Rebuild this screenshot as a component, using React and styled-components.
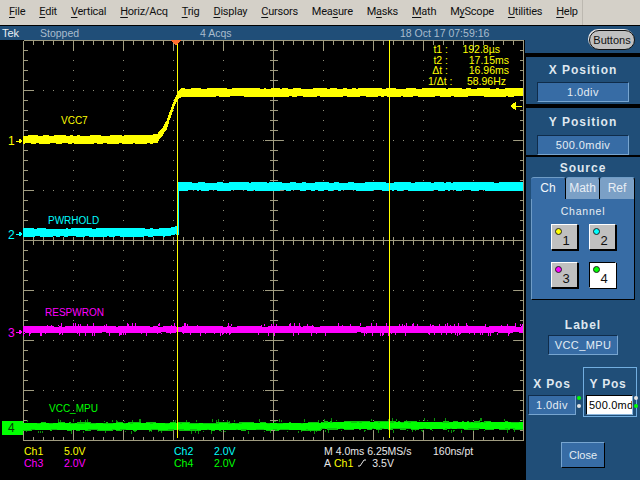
import React from "react";
import styled, { createGlobalStyle } from "styled-components";

const Y = "#ffff00", C = "#00ffff", M = "#ff00ff", G = "#00ff00";
const BLUE = "#204e78", FIELD = "#376ca5", LINE = "#a09c80", DOT = "#8c8c78";
const SCOPE = "'Liberation Sans', Arial, sans-serif";

const Global = createGlobalStyle`
  html, body { margin: 0; padding: 0; background: #000; }
  * { box-sizing: border-box; }
`;

const Screen = styled.div`
  width: 640px; height: 480px; display: flex; flex-direction: column;
  background: #000; overflow: hidden; font-family: ${SCOPE}; font-size: 10.5px;
`;
const MenuBar = styled.div`
  height: 26px; flex: none; display: flex; align-items: center; gap: 14px;
  padding: 0 0 2px 9px; background: #d4d0c8; border-bottom: 1px solid #000;
  font-family: Roboto, sans-serif; font-size: 11px; letter-spacing: -.25px; color: #111; position: relative;
`;
const MenuItem = styled.span`
  u { text-underline-offset: 2px; }
`;
const MenuDivider = styled.i`
  position: absolute; left: 582px; top: 0; bottom: 0; width: 1px; background: #bcb8b0;
`;
const Body = styled.div`
  flex: 1; display: flex; min-height: 0;
`;
const Main = styled.div`
  width: 525px; flex: none; display: flex; flex-direction: column;
`;
const StatusBar = styled.div`
  height: 14px; flex: none; background: ${BLUE}; display: grid;
  grid-template-columns: 38px 160px 200px 1fr; align-items: center; padding-left: 2px;
  line-height: 14px; color: #a9bccd;
`;
const Tek = styled.span`color: #e8eef4; font-size: 11px;`;
const Plot = styled.div`
  position: relative; height: 401px; flex: none;
`;
const PlotSvg = styled.svg`
  display: block; width: 525px; height: 401px;
`;
const Tag = styled.span`
  position: absolute; left: ${p => p.$x}px; top: ${p => p.$y}px; color: ${p => p.$c};
  font-size: 10px; line-height: 11px; white-space: nowrap;
`;
const GroundNum = styled.span`
  position: absolute; left: ${p => p.$x}px; top: ${p => p.$y}px; color: ${p => p.$c};
  font-size: 12px; line-height: 12px;
`;
const GroundChip = styled.div`
  position: absolute; left: 2px; top: 381px; width: 21px; height: 14px; background: ${G};
  color: #0a3a0a; font-size: 12px; line-height: 15px; padding-left: 6px;
`;
const CursorBox = styled.div`
  position: absolute; left: 428px; top: 4px; width: 81px; display: grid;
  grid-template-columns: 20px 1fr; grid-auto-rows: 10.7px; line-height: 11px; color: ${Y}; font-size: 10.5px;
`;
const CursorKey = styled.span`text-align: right; white-space: nowrap;`;
const CursorVal = styled.span`text-align: right; padding-right: ${p => p.$inset}px; white-space: nowrap;`;
const Footer = styled.div`
  flex: 1; display: grid; grid-template-columns: 40px 110px 40px 110px 109px 1fr;
  grid-auto-rows: 12px; padding: 4px 0 0 24px; line-height: 12px;
`;
const Read = styled.span`color: ${p => p.$c || "#e8e8e8"}; white-space: nowrap;`;
const Trigger = styled.span`
  grid-column: span 2; color: #e8e8e8; display: flex; align-items: center; gap: 3px;
`;
const Slope = styled.svg`width: 8px; height: 8px; margin: 0 3px 0 2px;`;

const Side = styled.div`
  flex: 1; display: flex; flex-direction: column; background: #000;
`;
const SideHeader = styled.div`
  height: 27px; background: ${BLUE}; display: flex; justify-content: flex-end; align-items: flex-start;
  padding: 4px 5px 0 0; margin-bottom: 4px;
`;
const Pill = styled.div`
  width: 46px; height: 20px; border-radius: 11px; background: #c0c0c0; color: #111;
  border: 1px solid #111; box-shadow: -1px -1px 0 #e8e8e8; text-align: center; line-height: 18px;
  font-size: 11px;
`;
const Panel = styled.div`
  margin-left: 1px; margin-bottom: ${p => p.$gap || 0}px; background: ${BLUE}; padding-top: ${p => p.$top}px; height: ${p => p.$h}px;
  display: flex; flex-direction: column; align-items: center; flex: ${p => (p.$h ? "none" : 1)};
`;
const Title = styled.div`
  color: #dfe7ef; font-weight: bold; font-size: 12px; letter-spacing: 1px; line-height: 15px; white-space: nowrap;
`;
const Field = styled.div`
  width: ${p => p.$w}px; height: 20px; margin-top: ${p => p.$mt}px; background: ${FIELD}; color: #e4ecf4;
  border: 1px solid; border-color: #0f2c4a #77a5d0 #77a5d0 #0f2c4a; text-align: center; line-height: 18px;
  white-space: nowrap; overflow: hidden; font-size: 11px; letter-spacing: .4px;
`;
const Tabs = styled.div`
  width: 104px; margin-top: 1px; display: flex; flex-direction: column;
`;
const TabRow = styled.div`display: grid; grid-template-columns: 35px 34px 35px; height: 22px;`;
const Tab = styled.div`
  background: ${p => (p.$on ? FIELD : "#7ba0c6")}; color: ${p => (p.$on ? "#f2f6fa" : "#e8eef4")};
  border-right: 1px solid #000;
  border-top: 1px solid #6f9cc6; border-radius: 3px 3px 0 0; text-align: center; line-height: 21px; font-size: 12px;
`;
const TabBody = styled.div`
  height: 101px; background: ${FIELD}; border-left: 1px solid #6f9cc6;
  border-right: 1px solid #000; border-bottom: 1px solid #000; padding-top: 6px;
  display: flex; flex-direction: column; align-items: center; color: #e8eef4; letter-spacing: .8px; line-height: 13px;
`;
const ChannelGrid = styled.div`
  margin-top: 6px; display: grid; grid-template-columns: 27px 27px; grid-auto-rows: 26px; gap: 12px 11px; letter-spacing: 0;
`;
const ChanBtn = styled.div`
  position: relative; background: ${p => (p.$on ? "#fff" : "#c0c0c0")};
  border: 1px solid; border-color: ${p => (p.$on ? "#000 #fff #fff #000" : "#fff #000 #000 #fff")};
  box-shadow: 1px 1px 0 #000; font-size: 13px; color: #111; line-height: 13px; padding: 9px 0 0 11px;
`;
const ChanDot = styled.i`
  position: absolute; left: 3px; top: 3px; width: 7px; height: 7px; border-radius: 50%;
  background: ${p => p.$c}; border: 1px solid #222;
`;
const LabelSection = styled.div`margin-top: 18px; display: flex; flex-direction: column; align-items: center;`;
const PosRow = styled.div`
  width: 109px; margin: 12px 0 0 2px; align-self: flex-start; display: grid; grid-template-columns: 55px 54px; align-items: start;
`;
const PosCell = styled.div`
  height: 50px; display: flex; flex-direction: column; align-items: flex-start; padding: 10px 0 0 0; position: relative;
`;
const PosBox = styled(PosCell)`
  border: 1px solid #72aee0; padding: 9px 0 0 2px;
`;
const PosTitle = styled(Title)`width: ${p => p.$w}px; text-align: center; letter-spacing: .8px;`;
const InField = styled(Field)`
  background: #fff; color: #000; border-color: #000 #88b4dc #88b4dc #000; text-align: left; padding-left: 2px; letter-spacing: .2px;
`;
const Knob = styled.i`
  position: absolute; width: 4px; height: 4px; border-radius: 50%; left: ${p => p.$x}px; top: ${p => p.$y}px;
  background: ${p => (p.$on ? G : "#e4e4e4")};
`;
const CloseBtn = styled.div`
  margin-top: 25px; width: 44px; height: 26px; background: ${FIELD}; color: #e4ecf4; text-align: center; line-height: 25px;
  border: 1px solid; border-color: #77a5d0 #000 #000 #77a5d0; font-size: 11px;
`;

function rng(seed) {
  let s = seed;
  return () => { s = (s * 1664525 + 1013904223) >>> 0; return s / 4294967296; };
}
function interp(pts, x) {
  if (x <= pts[0][0]) return pts[0][1];
  for (let i = 1; i < pts.length; i++) {
    if (x <= pts[i][0]) {
      const [a, b] = pts[i - 1], [c, d] = pts[i];
      return b + (d - b) * (x - a) / (c - a);
    }
  }
  return pts[pts.length - 1][1];
}
/* Solid trace whose two edges are notched in short runs, like an envelope-mode acquisition. */
function band(seed, pts, half, notch, odds) {
  const r = rng(seed);
  let d = "", runT = 0, valT = 0, runB = 0, valB = 0;
  for (let x = 23; x < 523; x += 1) {
    if (runT-- <= 0) { runT = 1 + Math.floor(r() * 5); valT = r() < odds ? 1 + Math.floor(r() * notch) : 0; }
    if (runB-- <= 0) { runB = 1 + Math.floor(r() * 5); valB = r() < odds ? 1 + Math.floor(r() * notch) : 0; }
    const c = interp(pts, x);
    const top = Math.round(c - half + valT), h = Math.round(c + half - valB) - top;
    d += `M${x} ${top}h1v${h}h-1z`;
  }
  return d;
}
function sparks(seed, pts, half, reach, p) {
  const r = rng(seed);
  let d = "";
  for (let x = 23; x < 523; x++) {
    if (r() < p) {
      const c = interp(pts, x), up = r() < .5;
      const len = 1 + Math.floor(r() * reach);
      d += `M${x} ${up ? Math.round(c - half - len) : Math.round(c + half)}h1v${len}h-1z`;
    }
  }
  return d;
}

const yPts = [[150, 139.5], [157, 138], [162, 132], [166, 125], [170, 114], [174, 102], [177, 96], [181, 92.5]];
const cPts = [[170, 232], [177, 230.5], [178, 186.5]];
const mPts = [[23, 329]];
const gPts = [[23, 426.5], [300, 426.5], [340, 425.5]];
const waves = [
  { c: Y, d: band(11, yPts, 4.5, 1, .35) },
  { c: C, d: band(23, cPts, 4.5, 1, .35) + "M177 188h2v47h-2z" },
  { c: M, d: band(37, mPts, 3.5, 1, .08) + sparks(38, mPts, 3.5, 3, .3) },
  { c: "#0a8f0a", d: sparks(41, gPts, 4.5, 3, .2) },
  { c: "#0cc40c", d: band(53, gPts, 4.5, 1, .5) },
  { c: G, d: band(59, gPts, 3.5, 1, .3) },
];

function grid() {
  const lines = [], dots = [];
  const L = 23, R = 523, T = 40, B = 440, CX = 273, CY = 240;
  lines.push(`M${L} ${T}H${R}M${L} ${B}H${R}M${L} ${T}V${B}M${R} ${T}V${B}M${CX} ${T}V${B}M${L} ${CY}H${R}`);
  for (let x = L; x <= R; x += 10) {
    const big = (x - L) % 50 === 0;
    lines.push(`M${x} ${T}v${big ? 10 : 4}M${x} ${B}v${big ? -10 : -4}M${x} ${CY - 4}v8`);
  }
  for (let y = T; y <= B; y += 10) {
    const big = (y - T) % 50 === 0;
    lines.push(`M${L} ${y}h${big ? 10 : 4}M${R} ${y}h${big ? -10 : -4}M${CX - 4} ${y}h8`);
    if (big && y !== CY) lines.push(`M${CX - 9} ${y}h18`);
  }
  for (let x = L + 50; x < R; x += 50) for (let y = T + 10; y < B; y += 10) {
    if (x !== CX) dots.push(`M${x} ${y}h1v1h-1z`);
  }
  for (let y = T + 50; y < B; y += 50) for (let x = L + 10; x < R; x += 10) {
    if (y !== CY && (x - L) % 50) dots.push(`M${x} ${y}h1v1h-1z`);
  }
  return { lines: lines.join(""), dots: dots.join("") };
}
const g = grid();

const Ground = ({ y, c }) => (
  <path d={`M16 ${y}h6M19 ${y - 2}l3 2l-3 2z`} stroke={c} fill={c} strokeWidth="1" />
);

const menus = [
  ["", "F", "ile"], ["", "E", "dit"], ["", "V", "ertical"], ["", "H", "oriz/Acq"], ["", "T", "rig"],
  ["", "D", "isplay"], ["", "C", "ursors"], ["Mea", "s", "ure"], ["M", "a", "sks"], ["", "M", "ath"],
  ["M", "y", "Scope"], ["", "U", "tilities"], ["", "H", "elp"],
];

export default function App() {
  return (
    <Screen>
      <Global />
      <MenuBar>
        {menus.map(([a, b, c]) => (
          <MenuItem key={a + b + c}>{a}<u>{b}</u>{c}</MenuItem>
        ))}
        <MenuDivider />
      </MenuBar>
      <Body>
        <Main>
          <StatusBar>
            <Tek>Tek</Tek><span>Stopped</span><span>4 Acqs</span><span>18 Oct 17 07:59:16</span>
          </StatusBar>
          <Plot>
            <PlotSvg viewBox="0 40 525 401" shapeRendering="crispEdges">
              <path d={g.dots} fill={DOT} />
              <path d={g.lines} stroke={LINE} fill="none" strokeWidth="1" transform="translate(.5 .5)" />
              {waves.map((w, i) => <path key={i} d={w.d} fill={w.c} />)}
              <path d="M177.5 43V438M389.5 40V438" stroke={Y} strokeWidth="1" fill="none" />
              <path d="M171 40h10l-5 6z" fill="#ff7030" />
              <path d="M511 106h11M511 106l4-3v6z" stroke={Y} fill={Y} strokeWidth="1" />
              <Ground y={141} c={Y} />
              <Ground y={234} c={C} />
              <Ground y={332} c={M} />
              <path d="M16 428h6M19 426l3 2l-3 2z" stroke="#063" fill="#063" />
            </PlotSvg>
            <GroundNum $x={8} $y={95} $c={Y}>1</GroundNum>
            <GroundNum $x={8} $y={189} $c={C}>2</GroundNum>
            <GroundNum $x={8} $y={287} $c={M}>3</GroundNum>
            <GroundChip>4</GroundChip>
            <Tag $x={61} $y={75} $c={Y}>VCC7</Tag>
            <Tag $x={48} $y={175} $c={C}>PWRHOLD</Tag>
            <Tag $x={45} $y={267} $c={M}>RESPWRON</Tag>
            <Tag $x={49} $y={363} $c={G}>VCC_MPU</Tag>
            <CursorBox>
              <CursorKey>t1 :</CursorKey><CursorVal $inset={9}>192.8µs</CursorVal>
              <CursorKey>t2 :</CursorKey><CursorVal $inset={0}>17.15ms</CursorVal>
              <CursorKey>Δt :</CursorKey><CursorVal $inset={0}>16.96ms</CursorVal>
              <CursorKey>1/Δt :</CursorKey><CursorVal $inset={3}>58.96Hz</CursorVal>
            </CursorBox>
          </Plot>
          <Footer>
            <Read $c={Y}>Ch1</Read><Read $c={Y}>5.0V</Read>
            <Read $c={C}>Ch2</Read><Read $c={C}>2.0V</Read>
            <Read>M 4.0ms 6.25MS/s</Read><Read>160ns/pt</Read>
            <Read $c={M}>Ch3</Read><Read $c={M}>2.0V</Read>
            <Read $c={G}>Ch4</Read><Read $c={G}>2.0V</Read>
            <Trigger>
              A <Read $c={Y}>Ch1</Read>
              <Slope viewBox="0 0 8 8"><path d="M0 7h2L6 1h2" stroke="#e8e8e8" fill="none" /></Slope>
              3.5V
            </Trigger>
          </Footer>
        </Main>
        <Side>
          <SideHeader><Pill>Buttons</Pill></SideHeader>
          <Panel $h={47} $top={6} $gap={4}>
            <Title>X Position</Title>
            <Field $w={92} $mt={4}>1.0div</Field>
          </Panel>
          <Panel $h={47} $top={7} $gap={2}>
            <Title>Y Position</Title>
            <Field $w={92} $mt={5}>500.0mdiv</Field>
          </Panel>
          <Panel $top={4}>
            <Title>Source</Title>
            <Tabs>
              <TabRow>
                <Tab $on>Ch</Tab><Tab>Math</Tab><Tab>Ref</Tab>
              </TabRow>
              <TabBody>
                Channel
                <ChannelGrid>
                  <ChanBtn><ChanDot $c={Y} />1</ChanBtn>
                  <ChanBtn><ChanDot $c={C} />2</ChanBtn>
                  <ChanBtn><ChanDot $c={M} />3</ChanBtn>
                  <ChanBtn $on><ChanDot $c={G} />4</ChanBtn>
                </ChannelGrid>
              </TabBody>
            </Tabs>
            <LabelSection>
              <Title>Label</Title>
              <Field $w={70} $mt={2}>VCC_MPU</Field>
            </LabelSection>
            <PosRow>
              <PosCell>
                <PosTitle $w={48}>X Pos</PosTitle>
                <Field $w={48} $mt={3}>1.0div</Field>
                <Knob $x={49} $y={29} $on />
                <Knob $x={49} $y={37} />
              </PosCell>
              <PosBox>
                <PosTitle $w={44}>Y Pos</PosTitle>
                <InField $w={47} $mt={3}>500.0md</InField>
                <Knob $x={50} $y={28} />
                <Knob $x={50} $y={36} $on />
              </PosBox>
            </PosRow>
            <CloseBtn>Close</CloseBtn>
          </Panel>
        </Side>
      </Body>
    </Screen>
  );
}
